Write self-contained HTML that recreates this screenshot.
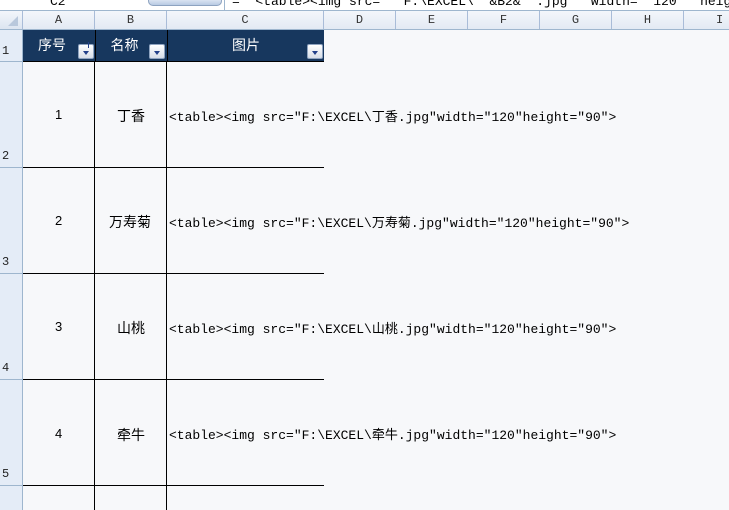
<!DOCTYPE html><html><head><meta charset="utf-8"><style>
*{margin:0;padding:0;box-sizing:border-box}
html,body{width:729px;height:510px;overflow:hidden}
body{background:#f7f8fa;position:relative;font-family:"Liberation Mono","Noto Sans CJK SC",monospace;font-size:13px;color:#000}
.a{position:absolute}
.ch{position:absolute;top:11px;height:19px;border-right:1px solid #a9bcd8;text-align:center;font-size:12px;line-height:19px;color:#333;background:linear-gradient(#f3f6fb,#e2e9f3)}
.rh{position:absolute;left:0;width:23px;background:#e4ecf7;border-bottom:1px solid #9eb6ce;border-right:1px solid #9eb6ce;font-size:12px;color:#222;padding-left:2px}
.hd{position:absolute;top:30px;height:32px;background:#17375e;color:#fff;font-family:"Liberation Sans","Noto Sans CJK SC",sans-serif;font-size:14px;line-height:30px;text-align:center}
.btn{position:absolute;top:14px;width:16px;height:15px;background:linear-gradient(#fff,#d6dde8);border:1px solid #8ea3c0;border-radius:2px}
.btn:after{content:"";position:absolute;left:4px;top:6px;border:3px solid transparent;border-top:4px solid #22408a}
.t{position:absolute;font-family:"Liberation Sans","Noto Sans CJK SC",sans-serif;font-size:14px}
.c{position:absolute;left:169px;font-size:13px;font-family:"Liberation Mono","Noto Sans CJK SC",monospace;white-space:nowrap}
</style></head><body>
<div class="a" style="left:0;top:0;width:729px;height:11px;background:#fff;border-bottom:1px solid #9eb6ce"></div>
<div class="a" style="left:50px;top:-6px;font-size:13px">C2</div>
<div class="a" style="left:148px;top:-4px;width:74px;height:10px;border-radius:6px;background:linear-gradient(#eef3fa,#b9cbe3);border:1px solid #8ea3c0"></div>
<div class="a" style="left:224px;top:0;width:1px;height:11px;background:#9eb6ce"></div>
<div class="a" style="left:232px;top:-6px;width:497px;overflow:hidden;font-size:13px;white-space:nowrap">= "&lt;table&gt;&lt;img src="" F:\EXCEL\" &amp;B2&amp; ".jpg"" width=""120"" height=""</div>
<div class="a" style="left:0;top:11px;width:23px;height:19px;background:linear-gradient(#f3f6fb,#dbe4f0);border-right:1px solid #a9bcd8"></div>
<div class="a" style="left:8px;top:16px;border:5px solid transparent;border-right-color:#b9c8dc;border-bottom-color:#b9c8dc"></div>
<div class="ch" style="left:23px;width:72px">A</div>
<div class="ch" style="left:95px;width:72px">B</div>
<div class="ch" style="left:167px;width:157px">C</div>
<div class="ch" style="left:324px;width:72px">D</div>
<div class="ch" style="left:396px;width:72px">E</div>
<div class="ch" style="left:468px;width:72px">F</div>
<div class="ch" style="left:540px;width:72px">G</div>
<div class="ch" style="left:612px;width:72px">H</div>
<div class="ch" style="left:684px;width:45px;border-right:none;text-align:left;padding-left:32px">I</div>
<div class="a" style="left:0;top:29px;width:729px;height:1px;background:#9eb6ce"></div>
<div class="rh" style="top:30px;height:32px;padding-top:14px">1</div>
<div class="rh" style="top:62px;height:106px;padding-top:87px">2</div>
<div class="rh" style="top:168px;height:106px;padding-top:87px">3</div>
<div class="rh" style="top:274px;height:106px;padding-top:87px">4</div>
<div class="rh" style="top:380px;height:106px;padding-top:87px">5</div>
<div class="rh" style="top:486px;height:24px;border-bottom:none"></div>
<div class="hd" style="left:23px;width:72px;padding-right:14px">序号<div class="btn" style="left:55px"></div></div>
<div class="hd" style="left:95px;width:72px;padding-right:14px;border-left:1px solid #000">名称<div class="btn" style="left:53px"></div></div>
<div class="hd" style="left:167px;width:157px;border-left:1px solid #000">图片<div class="btn" style="left:139px"></div></div>
<div class="a" style="left:23px;top:61px;width:301px;height:1px;background:#000"></div>
<div class="a" style="left:94px;top:62px;width:1px;height:448px;background:#000"></div>
<div class="a" style="left:166px;top:62px;width:1px;height:448px;background:#000"></div>
<div class="a" style="left:23px;top:167px;width:301px;height:1px;background:#000"></div>
<div class="a" style="left:23px;top:273px;width:301px;height:1px;background:#000"></div>
<div class="a" style="left:23px;top:379px;width:301px;height:1px;background:#000"></div>
<div class="a" style="left:23px;top:485px;width:301px;height:1px;background:#000"></div>
<div class="t" style="left:55px;top:107px;font-size:13px">1</div><div class="t" style="left:117px;top:106px">丁香</div>
<div class="c" style="top:106px">&lt;table&gt;&lt;img src="F:\EXCEL\丁香.jpg"width="120"height="90"&gt;</div>
<div class="t" style="left:55px;top:213px;font-size:13px">2</div><div class="t" style="left:109px;top:212px">万寿菊</div>
<div class="c" style="top:212px">&lt;table&gt;&lt;img src="F:\EXCEL\万寿菊.jpg"width="120"height="90"&gt;</div>
<div class="t" style="left:55px;top:319px;font-size:13px">3</div><div class="t" style="left:117px;top:318px">山桃</div>
<div class="c" style="top:318px">&lt;table&gt;&lt;img src="F:\EXCEL\山桃.jpg"width="120"height="90"&gt;</div>
<div class="t" style="left:55px;top:426px;font-size:13px">4</div><div class="t" style="left:117px;top:425px">牵牛</div>
<div class="c" style="top:424px">&lt;table&gt;&lt;img src="F:\EXCEL\牵牛.jpg"width="120"height="90"&gt;</div>
<div class="a" style="left:88px;top:42px;width:1px;height:6px;background:#22408a"></div>
</body></html>
